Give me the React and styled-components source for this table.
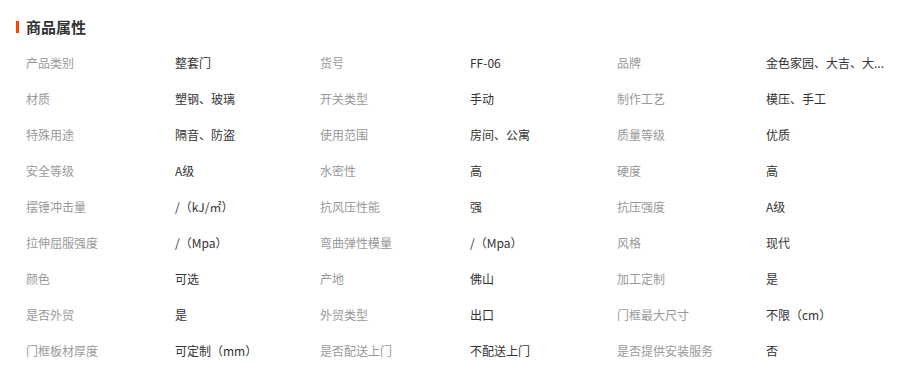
import React from "react";
import styled, { createGlobalStyle } from "styled-components";

//STYLES

const GlobalStyle = createGlobalStyle`
  body {
    margin: 0;
    background: #ffffff;
    font-family: "Microsoft YaHei", "Noto Sans CJK SC", "Noto Sans", sans-serif;
  }
`;

const Wrapper = styled.div`
  width: 903px;
  padding-top: 18px;
`;

const Title = styled.h3`
  display: flex;
  align-items: center;
  gap: 7px;
  margin: 0 0 8px 16px;
  height: 18px;
  font-size: 15px;
  font-weight: bold;
  line-height: 18px;
  color: #333333;
  &::before {
    content: "";
    display: block;
    width: 3px;
    height: 12px;
    background-color: #ff4400;
  }
`;

const Table = styled.div`
  display: grid;
  grid-template-columns: 149px 145px 150px 147px 149px 125px;
  grid-auto-rows: 36px;
  padding-left: 26px;
`;

const Cell = styled.div`
  display: flex;
  align-items: center;
  font-size: 12px;
  color: ${(p) => (p.$label ? "#999999" : "#333333")};
  white-space: nowrap;
  overflow: hidden;
  text-overflow: ellipsis;
`;

//DATA
const rows = [
  ["产品类别", "整套门", "货号", "FF-06", "品牌", "金色家园、大吉、大..."],
  ["材质", "塑钢、玻璃", "开关类型", "手动", "制作工艺", "模压、手工"],
  ["特殊用途", "隔音、防盗", "使用范围", "房间、公寓", "质量等级", "优质"],
  ["安全等级", "A级", "水密性", "高", "硬度", "高"],
  ["摆锤冲击量", "/（kJ/㎡）", "抗风压性能", "强", "抗压强度", "A级"],
  ["拉伸屈服强度", "/（Mpa）", "弯曲弹性模量", "/（Mpa）", "风格", "现代"],
  ["颜色", "可选", "产地", "佛山", "加工定制", "是"],
  ["是否外贸", "是", "外贸类型", "出口", "门框最大尺寸", "不限（cm）"],
  ["门框板材厚度", "可定制（mm）", "是否配送上门", "不配送上门", "是否提供安装服务", "否"],
];

//COMPONENT
function App() {
  return (
    <Wrapper>
      <GlobalStyle />
      <Title>商品属性</Title>
      <Table>
        {rows.map((row, i) =>
          row.map((text, j) => (
            <Cell key={`${i}-${j}`} $label={j % 2 === 0}>
              {text}
            </Cell>
          ))
        )}
      </Table>
    </Wrapper>
  );
}

export default App;
